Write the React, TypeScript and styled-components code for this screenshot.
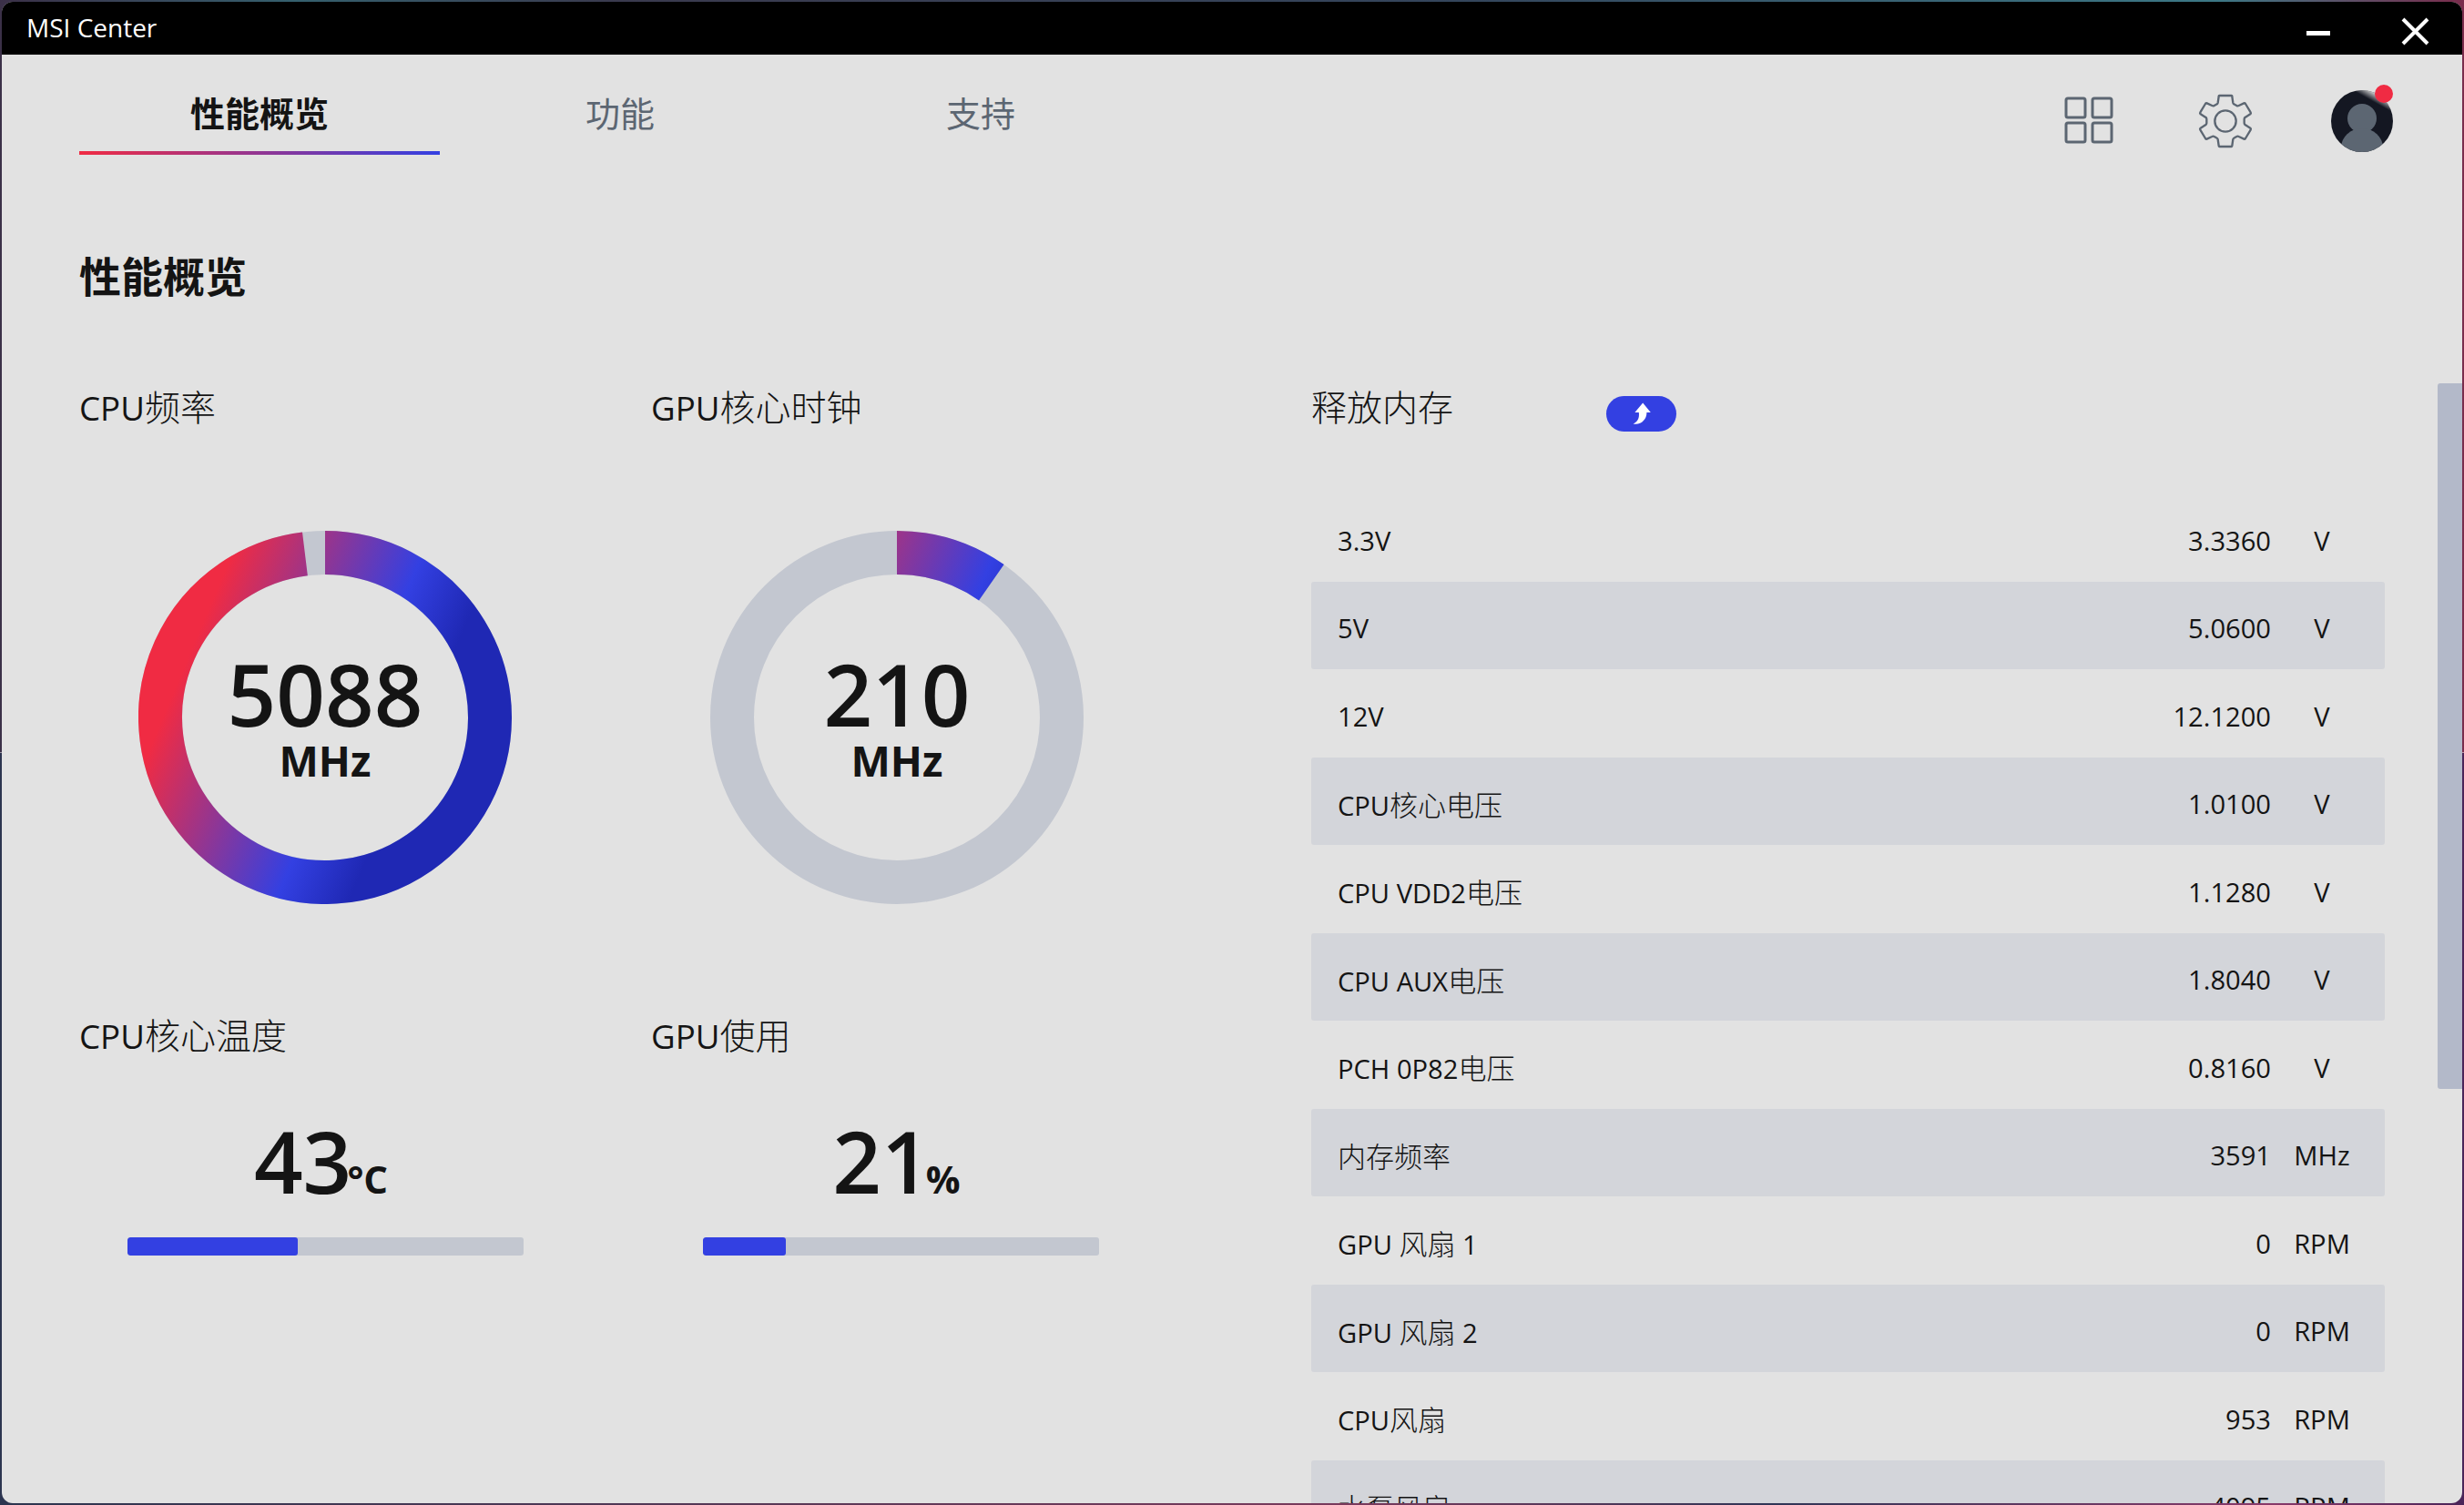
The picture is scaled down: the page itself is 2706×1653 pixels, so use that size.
import React from "react";
import styled, { createGlobalStyle } from "styled-components";

const INK = "#141414";
const MUTED = "#5c6672";
const SURFACE = "#e2e2e2";
const TRACK = "#c3c7d0";
const BLUE = "#3340e2";
const RED = "#f02b43";

const GlobalStyle = createGlobalStyle`
  html, body, #root { height: 100%; margin: 0; }
  *, *::before, *::after { box-sizing: border-box; }
  body {
    overflow: hidden;
    color: ${INK};
    font-family: "Open Sans", "Noto Sans CJK SC", sans-serif;
  }
  button {
    padding: 0;
    border: 0;
    background: none;
    color: inherit;
    font: inherit;
    cursor: pointer;
  }
  svg { display: block; }
`;

const Desktop = styled.div`
  height: 100%;
  padding: 2px;
  background:
    linear-gradient(90deg, #3b3048, #35606e 12%, #3a3a4e 25%, #34465c 60%, #3c7886 90%, #7a2c4c) top / 100% 50% no-repeat,
    linear-gradient(90deg, #2c3550, #7a3a5c 55%, #2f3556 72%, #8a3a6a 92%, #4a2458) bottom / 100% 50% no-repeat;
`;

const Window = styled.div`
  display: flex;
  flex-direction: column;
  height: 100%;
  overflow: hidden;
  border-radius: 12px;
  background: ${SURFACE};
`;

const TitleBar = styled.header`
  display: flex;
  flex: none;
  justify-content: space-between;
  height: 58px;
  padding: 0 22px 0 27px;
  background: #000;
  color: #fff;
`;

const AppName = styled.span`
  font-size: 28px;
  line-height: 56px;
`;

const WindowControls = styled.div`
  display: flex;
  gap: 46px;
`;

const WindowButton = styled.button`
  display: grid;
  place-items: center;
  width: 60px;
  height: 58px;
  padding-top: 7px;
`;

const NavBar = styled.nav`
  display: flex;
  flex: none;
  justify-content: space-between;
  height: 110px;
  padding: 0 76px 0 85px;
`;

const Tabs = styled.div`
  display: flex;
`;

const Tab = styled.button<{ $active?: boolean }>`
  width: 396px;
  padding-top: 18px;
  border-bottom: 4px solid transparent;
  border-image: ${(p) => (p.$active ? `linear-gradient(90deg, ${RED}, ${BLUE}) 1` : "none")};
  border-image-width: 0 0 4px 0;
  color: ${(p) => (p.$active ? INK : MUTED)};
  font-size: 38px;
  font-weight: ${(p) => (p.$active ? 700 : 400)};
`;

const Tools = styled.div`
  display: flex;
  align-items: center;
  gap: 82px;
  padding-top: 35px;
`;

const ToolButton = styled.button`
  display: grid;
  place-items: center;
  width: 68px;
  height: 68px;
`;

const AvatarButton = styled(ToolButton)`
  position: relative;
`;

const Badge = styled.span`
  position: absolute;
  top: -6px;
  right: 0;
  width: 20px;
  height: 20px;
  border-radius: 50%;
  background: ${RED};
`;

const PageTitle = styled.h1`
  flex: none;
  margin: 103px 85px 88px;
  font-size: 46px;
  font-weight: 700;
  line-height: 60px;
`;

const ScrollArea = styled.main`
  display: flex;
  flex: 1;
  gap: 58px;
  min-height: 0;
  padding-left: 85px;
`;

const Dashboard = styled.div`
  display: grid;
  flex: 1;
  grid-template-columns: minmax(0, 628fr) minmax(0, 725fr) minmax(0, 1179fr);
  min-width: 0;
  overflow: hidden;
`;

const MeterColumn = styled.div`
  display: flex;
  flex-direction: column;
  gap: 118px;
`;

const SectionTitle = styled.h2`
  margin: 0;
  font-size: 39px;
  font-weight: 400;
  line-height: 52px;
`;

const Latin = styled.span`
  font-size: 94%;
`;

const Han = styled.span`
  font-weight: 300;
`;

const Dial = styled.div`
  display: grid;
  place-items: center;
  width: 540px;
  margin-top: 109px;

  > * { grid-area: 1 / 1; }
`;

const Reading = styled.div`
  padding-bottom: 2px;
  text-align: center;
`;

const BigNumber = styled.div`
  font-size: 94px;
  font-weight: 600;
  line-height: 96px;
`;

const DialUnit = styled.div`
  font-size: 46px;
  font-weight: 700;
  line-height: 50px;
`;

const BarMeter = styled.div<{ $inset: number }>`
  width: 435px;
  margin: 63px 0 0 ${(p) => p.$inset}px;
`;

const BarReading = styled.div`
  display: flex;
  align-items: baseline;
  justify-content: center;
  height: 132px;
  padding-right: 10px;
`;

const BarUnit = styled.span`
  margin-left: -5px;
  font-size: 42px;
  font-weight: 700;
`;

const BarTrack = styled.div`
  height: 20px;
  overflow: hidden;
  border-radius: 3px;
  background: ${TRACK};
`;

const BarFill = styled.div`
  height: 100%;
  border-radius: 3px;
  background: ${BLUE};
`;

const SensorHeader = styled.div`
  display: flex;
  gap: 168px;
  margin-bottom: 68px;
`;

const ReleaseButton = styled.button`
  display: grid;
  place-items: center;
  width: 77px;
  height: 39px;
  margin-top: 14px;
  border-radius: 20px;
  background: ${BLUE};
`;

const SensorTable = styled.table`
  width: 100%;
  border-spacing: 0;
  font-size: 31px;
`;

const SensorRow = styled.tr`
  height: 97px;

  &:nth-child(even) { height: 96px; }
  &:nth-child(even) > * { background: #d3d5da; }
  > :first-child { border-radius: 3px 0 0 3px; }
  > :last-child { border-radius: 0 3px 3px 0; }
`;

const SensorName = styled.th`
  padding: 4px 0 0 29px;
  font-weight: 400;
  text-align: left;
`;

const SensorValue = styled.td`
  padding: 4px 0 0;
  text-align: right;
`;

const SensorUnit = styled.td`
  width: 125px;
  padding: 4px 13px 0 0;
  text-align: center;
`;

const ScrollThumb = styled.div`
  flex: none;
  width: 27px;
  height: 63%;
  border-radius: 3px 0 0 3px;
  background: #b3b9c9;
`;

/* Han glyphs are set light and slightly larger than the Latin beside them. */
function MixedText({ children }: { children: string }) {
  const parts = children.match(/[\u4e00-\u9fff]+|[^\u4e00-\u9fff]+/g) ?? [];
  return (
    <>
      {parts.map((part, i) =>
        /[\u4e00-\u9fff]/.test(part) ? <Han key={i}>{part}</Han> : <Latin key={i}>{part}</Latin>
      )}
    </>
  );
}

const SIZE = 410;
const THICKNESS = 48;
const RADIUS = (SIZE - THICKNESS) / 2;

function Gauge({ id, title, value, unit, degrees }: {
  id: string;
  title: string;
  value: string;
  unit: string;
  degrees: number;
}) {
  const c = SIZE / 2;
  const a = (degrees * Math.PI) / 180;
  const endX = c + RADIUS * Math.sin(a);
  const endY = c - RADIUS * Math.cos(a);
  return (
    <section>
      <SectionTitle><MixedText>{title}</MixedText></SectionTitle>
      <Dial>
        <svg width={SIZE} height={SIZE} viewBox={`0 0 ${SIZE} ${SIZE}`} fill="none" strokeWidth={THICKNESS} aria-hidden="true">
          <defs>
            <linearGradient id={id} gradientUnits="userSpaceOnUse" x1="16" y1="125" x2="394" y2="285">
              <stop offset="0.1" stopColor={RED} />
              <stop offset="0.57" stopColor={BLUE} />
              <stop offset="0.75" stopColor="#1f28b4" />
            </linearGradient>
          </defs>
          <circle cx={c} cy={c} r={RADIUS} stroke={TRACK} />
          <path
            d={`M ${c} ${c - RADIUS} A ${RADIUS} ${RADIUS} 0 ${degrees > 180 ? 1 : 0} 1 ${endX} ${endY}`}
            stroke={`url(#${id})`}
          />
        </svg>
        <Reading>
          <BigNumber>{value}</BigNumber>
          <DialUnit>{unit}</DialUnit>
        </Reading>
      </Dial>
    </section>
  );
}

function Bar({ title, value, unit, inset }: {
  title: string;
  value: number;
  unit: string;
  inset: number;
}) {
  return (
    <section>
      <SectionTitle><MixedText>{title}</MixedText></SectionTitle>
      <BarMeter $inset={inset}>
        <BarReading>
          <BigNumber>{value}</BigNumber>
          <BarUnit>{unit}</BarUnit>
        </BarReading>
        <BarTrack role="progressbar" aria-label={title} aria-valuenow={value} aria-valuemin={0} aria-valuemax={100}>
          <BarFill style={{ width: `${value}%` }} />
        </BarTrack>
      </BarMeter>
    </section>
  );
}

const sensors: [string, string, string][] = [
  ["3.3V", "3.3360", "V"],
  ["5V", "5.0600", "V"],
  ["12V", "12.1200", "V"],
  ["CPU核心电压", "1.0100", "V"],
  ["CPU VDD2电压", "1.1280", "V"],
  ["CPU AUX电压", "1.8040", "V"],
  ["PCH 0P82电压", "0.8160", "V"],
  ["内存频率", "3591", "MHz"],
  ["GPU 风扇 1", "0", "RPM"],
  ["GPU 风扇 2", "0", "RPM"],
  ["CPU风扇", "953", "RPM"],
  ["水泵风扇", "4095", "RPM"],
];

const AppsIcon = () => (
  <svg width="54" height="54" viewBox="0 0 54 54" fill="none" stroke={MUTED} strokeWidth="3" aria-hidden="true">
    <rect x="2" y="2" width="21" height="21" rx="2" />
    <rect x="31" y="2" width="21" height="21" rx="2" />
    <rect x="2" y="29" width="21" height="21" rx="2" />
    <rect x="31" y="29" width="21" height="21" rx="2" />
  </svg>
);

const GearIcon = () => (
  <svg width="60" height="60" viewBox="0 0 180 180" fill="none" stroke={MUTED} strokeWidth="7" strokeLinejoin="round" aria-hidden="true">
    <path d="M70 6H110Q112 6 112 9L115 30Q116 34 120 35L127 39Q130 41 134 39L151 31Q154 30 156 33L173 61Q175 64 172 67L156 77Q152 79 152 83V97Q152 101 156 103L172 113Q175 116 173 119L156 147Q154 150 151 149L134 141Q130 139 127 141L120 145Q116 146 115 150L112 171Q112 174 110 174H70Q68 174 68 171L65 150Q64 146 60 145L53 141Q50 139 46 141L29 149Q26 150 24 147L7 119Q5 116 8 113L24 103Q28 101 28 97V83Q28 79 24 77L8 67Q5 64 7 61L24 33Q26 30 29 31L46 39Q50 41 53 39L60 35Q64 34 65 30L68 9Q68 6 70 6Z" />
    <circle cx="90" cy="90" r="35" />
  </svg>
);

const AvatarIcon = () => (
  <svg width="68" height="68" viewBox="0 0 68 68" aria-hidden="true">
    <defs>
      <clipPath id="avatar-clip"><circle cx="34" cy="34" r="34" /></clipPath>
      <linearGradient id="avatar-glow" gradientUnits="userSpaceOnUse" x1="47" y1="13" x2="52" y2="4">
        <stop offset="0" stopColor={SURFACE} stopOpacity="0" />
        <stop offset="1" stopColor={SURFACE} />
      </linearGradient>
    </defs>
    <g clipPath="url(#avatar-clip)">
      <rect width="68" height="68" fill="#141722" />
      <rect width="68" height="68" fill="url(#avatar-glow)" />
      <circle cx="34" cy="31" r="16" fill={MUTED} />
      <path d="M24 42H44L41 46H27Z" fill={MUTED} />
      <ellipse cx="34" cy="63" rx="23" ry="21" fill={MUTED} />
    </g>
  </svg>
);

export default function App() {
  return (
    <>
      <GlobalStyle />
      <Desktop>
        <Window>
          <TitleBar>
            <AppName>MSI Center</AppName>
            <WindowControls>
              <WindowButton aria-label="最小化">
                <svg width="32" height="32" viewBox="0 0 32 32" aria-hidden="true">
                  <rect x="3" y="15" width="26" height="5" fill="#fff" />
                </svg>
              </WindowButton>
              <WindowButton aria-label="关闭">
                <svg width="32" height="32" viewBox="0 0 32 32" stroke="#fff" strokeWidth="4" aria-hidden="true">
                  <path d="M3 2L30 29M30 2L3 29" />
                </svg>
              </WindowButton>
            </WindowControls>
          </TitleBar>
          <NavBar>
            <Tabs>
              <Tab $active>性能概览</Tab>
              <Tab>功能</Tab>
              <Tab>支持</Tab>
            </Tabs>
            <Tools>
              <ToolButton aria-label="应用"><AppsIcon /></ToolButton>
              <ToolButton aria-label="设置"><GearIcon /></ToolButton>
              <AvatarButton aria-label="账户">
                <AvatarIcon />
                <Badge />
              </AvatarButton>
            </Tools>
          </NavBar>
          <PageTitle>性能概览</PageTitle>
          <ScrollArea>
            <Dashboard>
              <MeterColumn>
                <Gauge id="cpu-clock" title="CPU频率" value="5088" unit="MHz" degrees={353} />
                <Bar title="CPU核心温度" value={43} unit="°C" inset={53} />
              </MeterColumn>
              <MeterColumn>
                <Gauge id="gpu-clock" title="GPU核心时钟" value="210" unit="MHz" degrees={35} />
                <Bar title="GPU使用" value={21} unit="%" inset={57} />
              </MeterColumn>
              <section>
                <SensorHeader>
                  <SectionTitle><MixedText>释放内存</MixedText></SectionTitle>
                  <ReleaseButton aria-label="释放内存">
                    <svg width="22" height="25" viewBox="0 0 22 25" fill="#fff" aria-hidden="true">
                      <path d="M12.2 0.5L20.8 10.9H16.4C16.6 19 9.5 25.4 1.6 23.4C6.6 21 8.6 17 7.8 10.9H3.4Z" />
                    </svg>
                  </ReleaseButton>
                </SensorHeader>
                <SensorTable>
                  <tbody>
                    {sensors.map(([name, value, unit]) => (
                      <SensorRow key={name}>
                        <SensorName scope="row"><MixedText>{name}</MixedText></SensorName>
                        <SensorValue><MixedText>{value}</MixedText></SensorValue>
                        <SensorUnit><MixedText>{unit}</MixedText></SensorUnit>
                      </SensorRow>
                    ))}
                  </tbody>
                </SensorTable>
              </section>
            </Dashboard>
            <ScrollThumb />
          </ScrollArea>
        </Window>
      </Desktop>
    </>
  );
}
